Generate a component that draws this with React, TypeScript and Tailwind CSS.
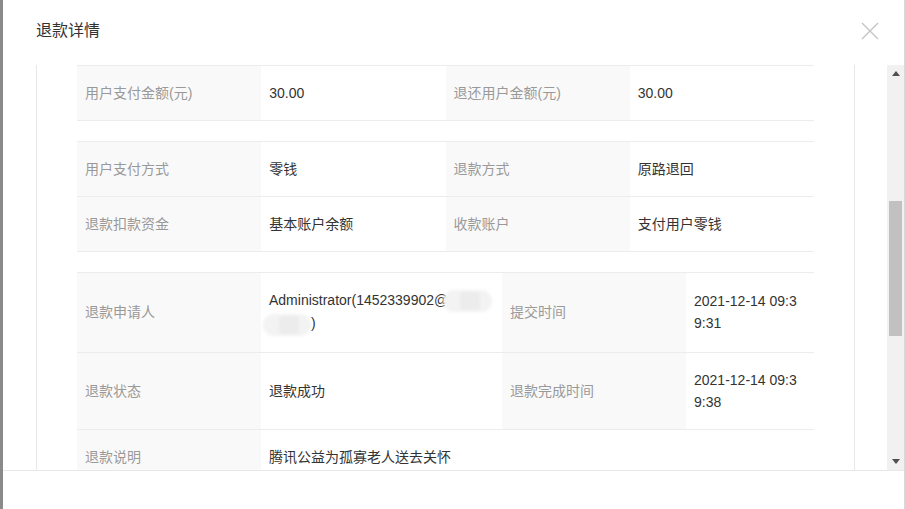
import React from 'react';

const font = { fontFamily: '"Liberation Sans", "Noto Sans CJK SC", sans-serif' };

const Label: React.FC<{ children: React.ReactNode; className?: string }> = ({ children, className = '' }) => (
  <div className={`flex items-center bg-[#f9f9f9] px-2 py-4 text-[#999] ${className}`}>{children}</div>
);

const Value: React.FC<{ children: React.ReactNode; className?: string }> = ({ children, className = '' }) => (
  <div className={`flex items-center bg-white px-2 py-4 text-[#333] ${className}`}>{children}</div>
);

const Blur: React.FC<{ className: string }> = ({ className }) => (
  <span className={`relative inline-block h-[22px] align-middle rounded-full bg-[#f3f3f3] blur-[1.5px] ${className}`}>
    <span className="absolute inset-y-[2px] left-1/3 right-1/4 rounded-sm bg-[#ececec]" />
  </span>
);

export default function App() {
  return (
    <div className="flex h-[509px] w-[905px] overflow-hidden bg-white text-[14px] leading-[22px]" style={font}>
      {/* backdrop edge */}
      <div className="w-[3px] shrink-0 bg-[#8a8a8a]" />

      <div className="flex flex-1 flex-col border-r border-[#d9d9d9]">
        {/* Header */}
        <div className="flex h-[65px] shrink-0 items-center justify-between pb-[3px] pl-[33px] pr-[25px]">
          <h2 className="text-[16px] text-[#333]">退款详情</h2>
          <svg width="18" height="18" viewBox="0 0 18 18" className="text-[#c4c4c4]">
            <path d="M1 1L17 17M17 1L1 17" stroke="currentColor" strokeWidth="1.4" />
          </svg>
        </div>

        {/* Body */}
        <div className="flex h-[405px] shrink-0">
          <div className="flex-1 overflow-hidden">
            <div className="ml-[33px] h-full w-[819px] border-x border-[#e8e8e8] px-10">
              {/* amounts */}
              <div className="border-t border-[#ececec]">
                <div className="grid grid-cols-4 border-b border-[#ececec]">
                  <Label>用户支付金额(元)</Label>
                  <Value>30.00</Value>
                  <Label>退还用户金额(元)</Label>
                  <Value>30.00</Value>
                </div>
              </div>

              {/* methods */}
              <div className="mt-5 border-t border-[#ececec]">
                <div className="grid grid-cols-4 border-b border-[#ececec]">
                  <Label>用户支付方式</Label>
                  <Value>零钱</Value>
                  <Label>退款方式</Label>
                  <Value>原路退回</Value>
                </div>
                <div className="grid grid-cols-4 border-b border-[#ececec]">
                  <Label>退款扣款资金</Label>
                  <Value>基本账户余额</Value>
                  <Label>收款账户</Label>
                  <Value>支付用户零钱</Value>
                </div>
              </div>

              {/* applicant */}
              <div className="mt-5 border-t border-[#ececec]">
                <div className="grid grid-cols-[184px_241px_184px_1fr] border-b border-[#ececec]">
                  <Label>退款申请人</Label>
                  <Value>
                    <div>
                      <div className="whitespace-nowrap">
                        Administrator(1452339902@
                        <Blur className="-ml-[5px] w-[49px]" />
                      </div>
                      <div className="whitespace-nowrap">
                        <Blur className="-ml-[6px] w-[48px]" />)
                      </div>
                    </div>
                  </Value>
                  <Label>提交时间</Label>
                  <Value>
                    <div>
                      2021-12-14 09:3
                      <br />
                      9:31
                    </div>
                  </Value>
                </div>
                <div className="grid grid-cols-[184px_241px_184px_1fr] border-b border-[#ececec]">
                  <Label>退款状态</Label>
                  <Value>退款成功</Value>
                  <Label>退款完成时间</Label>
                  <Value>
                    <div>
                      2021-12-14 09:3
                      <br />
                      9:38
                    </div>
                  </Value>
                </div>
                <div className="grid grid-cols-[184px_1fr] border-b border-[#ececec]">
                  <Label>退款说明</Label>
                  <Value>腾讯公益为孤寡老人送去关怀</Value>
                </div>
              </div>
            </div>
          </div>

          {/* scrollbar */}
          <div className="flex w-[17px] shrink-0 flex-col bg-[#f1f1f1]">
            <div className="flex h-[17px] items-center justify-center">
              <svg width="8" height="5" viewBox="0 0 8 5"><path d="M4 0L8 5H0Z" fill="#505050" /></svg>
            </div>
            <div className="mt-[119px] mx-[2px] h-[135px] bg-[#c1c1c1]" />
            <div className="flex-1" />
            <div className="flex h-[17px] items-center justify-center">
              <svg width="8" height="5" viewBox="0 0 8 5"><path d="M0 0H8L4 5Z" fill="#505050" /></svg>
            </div>
          </div>
        </div>

        {/* Footer */}
        <div className="flex-1 border-t border-[#e8e8e8]" />
      </div>
    </div>
  );
}
